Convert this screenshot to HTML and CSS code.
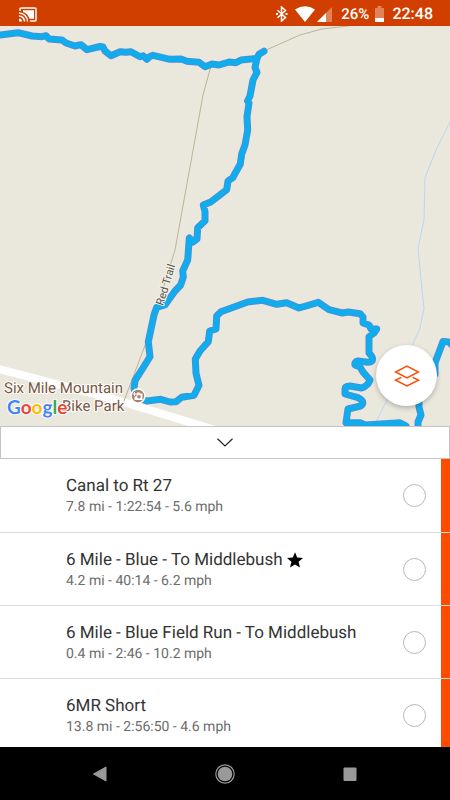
FILE: index.html
```html
<!DOCTYPE html>
<html lang="en">
<head>
<meta charset="utf-8">
<meta name="viewport" content="width=device-width, initial-scale=1">
<title>Trails</title>
<link rel="stylesheet" href="styles.css">
</head>
<body>
<header class="status">
  <svg class="cast" viewBox="0 0 18 15" width="18" height="15" aria-hidden="true">
    <path d="M1 4V2q0-1 1-1h14q1 0 1 1v11q0 1-1 1h-5" fill="none" stroke="#fff" stroke-width="1.5"/>
    <path d="M4 3.200h11v8.600h-4.500Q9 6.500 4 5z" fill="#fff"/>
    <path d="M0 6a8.500 8.500 0 0 1 8.500 8.500M0 9a5.500 5.500 0 0 1 5.500 5.500" fill="none" stroke="#fff" stroke-width="1.500"/>
    <path d="M0 11.500a3 3 0 0 1 3 3H0z" fill="#fff"/>
  </svg>
  <div class="indicators">
    <svg viewBox="0 0 12 16" width="12" height="16" aria-hidden="true">
      <path d="M1.500 4.200l8 7.300-4 3.500V1l4 3.500-8 7.300" fill="none" stroke="#fff" stroke-width="1.500"/>
      <path d="M0 7h2v2H0zM9.500 7h2v2h-2z" fill="#fff"/>
    </svg>
    <svg class="wifi" viewBox="0 0 20 16" width="20" height="16" aria-hidden="true">
      <path d="M0 3.500Q10-3 20 3.500L10 16z" fill="#fff"/>
    </svg>
    <svg viewBox="0 0 15 16" width="15" height="16" aria-hidden="true">
      <path d="M0 16L15 1v15z" fill="#fff" opacity=".35"/>
      <path d="M0 16l9-9v9z" fill="#fff"/>
    </svg>
    <span class="percent">26%</span>
    <svg class="battery" viewBox="0 0 9 16" width="9" height="16" aria-hidden="true">
      <path d="M0 2h2.500V0h4v2H9v10H0z" fill="#fff" opacity=".35"/>
      <path d="M0 12h9v4H0z" fill="#fff"/>
    </svg>
    <time>22:48</time>
  </div>
</header>

<main class="map">
  <svg class="terrain" viewBox="0 26 450 400" preserveAspectRatio="xMidYMid slice" role="img" aria-label="Trail map">
    <polyline class="road" points="-5,368 110,398 215,430"/>
    <path class="river" d="M450 122L436 150 425 178 424 220 418 248 422 290 424 308 420 328 412 346 387 400 374 426"/>
    <path class="path" d="M264 51L300 35 322 29 348 26M211 66L203 95 175 250 171 263 147 340 124 401"/>
    <g class="trails">
      <path id="t1" d="M-4 35.500L0 35 18 32.700 32 36 42 36.700 46 35.700 49 39 62 40 66 43 75 46 81 44.700 87 49.700 100 46.500 103 47 105 51 111 55.700 120 51.700 126 52.300 131 51.700 140 56.700 143 55.700 147 59.300 150 56.500 153 55.300 170 59.300 181 59 187 61.300 199 62.300 205 66.700 212 64 219 65 229 62 236 62.700 241 60 257 58.300 259 54.300 264 51.300"/>
      <path id="t2" d="M257 58L255 67.700 257 72.300 253 80 250 96 247.500 101 249 103 247 116.700 247.700 130 245 145 241.700 154 240.300 164 232.700 177.700 228 181 226.700 189.700 210.700 202 203.300 205 205 211.700 205 220.700 197.700 227.700 197 239 193 242 189.300 238 187.700 260 182.700 271 183.300 277 180.700 285 175 291 165 305 156.700 307.300 154 315 148.300 341.700 150 356.700 146.700 362 135 380.700 134 388 136 397 146.700 401 160.700 399.300 170 402 176 401.700 181.700 397.300 194 395.300 199 385.300 196 373.300 195.300 359 200 351 208.300 341.700 209.700 331 216 329 216.700 316 221 311.700 247.700 302 262.700 300.300 276.700 304.300 286.700 302.700 299 308 318.300 302.300 329 309.700 342.300 313 348.300 312 360 313.700 363 317 363 323 369 325 371 329 376.700 329 374 333 369 336.700 369 353Q374 358 372 361 370 363 366 362L358 361Q354 362 355 365L360 367 363 372 370 380Q368 386 361.700 388L350 386Q345 386 345 389V394L358 397.700Q366 402 360.700 406L348 409 346 422.700 360 422.700 365 425 400 422.700 406 426"/>
      <path id="t3" d="M452 345L449 342 443 341.500 435 363V374M419 402L419 407 421 415 418 422V430"/>
    </g>
    <g class="trail-core">
      <use href="#t1"/><use href="#t2"/><use href="#t3"/>
    </g>
    <text class="trail-name" transform="translate(163 306) rotate(-73)">Red Trail</text>
    <g class="place">
      <text x="4" y="393">Six Mile Mountain</text>
      <text x="62" y="411">Bike Park</text>
    </g>
    <circle cx="138" cy="396" r="7" fill="#a9826b" stroke="#fff" stroke-width="1.500"/>
    <path d="M136.500 393.500l1-1h2l1 1h2v6.500h-8v-3.500h2z" fill="#fff"/>
    <circle cx="139" cy="396.800" r="1.800" fill="#a9826b"/>
    <path d="M134.500 392v4M132.500 394h4" stroke="#fff" fill="none"/>
    <text class="google" x="7" y="414"><tspan fill="#4285f4">G</tspan><tspan fill="#ea4335">o</tspan><tspan fill="#fbbc05">o</tspan><tspan fill="#4285f4">g</tspan><tspan fill="#34a853">l</tspan><tspan fill="#ea4335">e</tspan></text>
  </svg>
  <button class="layers" type="button" aria-label="Map layers">
    <svg viewBox="0 0 26 22" width="26" height="22" aria-hidden="true">
      <path d="M13 1.200L24.500 7 13 12.800 1.500 7zM7.300 12.300L1.500 15.200 13 20.800 24.500 15.200 18.700 12.300" fill="none" stroke="#ff4b00" stroke-width="1.500"/>
    </svg>
  </button>
</main>

<button class="handle" type="button" aria-label="Collapse list">
  <svg viewBox="0 0 16 9" width="16" height="9" aria-hidden="true">
    <path d="M.5.800L8 8 15.500.800" fill="none" stroke="#222" stroke-width="1.200"/>
  </svg>
</button>

<ul class="list">
  <li class="row">
    <label class="info" for="r1"><span class="name">Canal to Rt 27</span><span class="stats">7.8 mi - 1:22:54 - 5.6 mph</span></label>
    <input class="pick" type="radio" name="route" id="r1">
  </li>
  <li class="row">
    <label class="info" for="r2"><span class="name">6 Mile - Blue - To Middlebush
      <svg class="star" viewBox="0 0 16 16" width="16" height="16" aria-hidden="true"><path d="M8 .3l2.200 5.300 5.800.4-4.400 3.800L13 15.500 8 12.400 3 15.500l1.400-5.700L0 6l5.800-.4z"/></svg></span><span class="stats">4.2 mi - 40:14 - 6.2 mph</span></label>
    <input class="pick" type="radio" name="route" id="r2">
  </li>
  <li class="row">
    <label class="info" for="r3"><span class="name">6 Mile - Blue Field Run - To Middlebush</span><span class="stats">0.4 mi - 2:46 - 10.2 mph</span></label>
    <input class="pick" type="radio" name="route" id="r3">
  </li>
  <li class="row">
    <label class="info" for="r4"><span class="name">6MR Short</span><span class="stats">13.8 mi - 2:56:50 - 4.6 mph</span></label>
    <input class="pick" type="radio" name="route" id="r4">
  </li>
</ul>

<nav class="system">
  <button type="button" aria-label="Back"><svg viewBox="0 0 20 20" width="20" height="20"><path d="M3.500 10L16 3v14z" fill="#999" stroke="#999" stroke-linejoin="round"/></svg></button>
  <button type="button" aria-label="Home"><svg viewBox="0 0 20 20" width="20" height="20"><circle cx="10" cy="10" r="9.200" fill="none" stroke="#999" stroke-width="1.200"/><circle cx="10" cy="10" r="7.300" fill="#999"/></svg></button>
  <button type="button" aria-label="Recent apps"><svg viewBox="0 0 20 20" width="20" height="20"><rect x="3.500" y="3.500" width="13" height="13.500" rx="1" fill="#999"/></svg></button>
</nav>
</body>
</html>
```
FILE: styles.css
```css
* {
  box-sizing: border-box;
}

body {
  margin: 0;
  height: 100vh;
  display: flex;
  flex-direction: column;
  background: #fff;
  font-family: Roboto, sans-serif;
  text-rendering: geometricPrecision;
  color: #333;
}

button {
  margin: 0;
  padding: 0;
  border: 0;
  background: none;
}

svg {
  display: block;
}

.status {
  flex: none;
  height: 26px;
  padding: 2px 17px 0 19px;
  display: flex;
  align-items: center;
  justify-content: space-between;
  background: #d13f00;
  color: #fff;
  font-size: 16px;
  font-weight: 500;
  line-height: 20px;
}

.indicators {
  display: flex;
  align-items: center;
}

.wifi {
  margin-left: 7px;
  margin-right: 2px;
}

.percent {
  margin-left: 9px;
  font-size: 15px;
}

.battery {
  margin: 0 8px 0 6px;
}

.map {
  flex: 1;
  min-height: 0;
  position: relative;
  overflow: hidden;
  background: #eae8dd;
}

.terrain {
  width: 100%;
  height: 100%;
}

.road,
.river,
.path,
.trails,
.trail-core {
  fill: none;
  stroke-linejoin: round;
  stroke-linecap: round;
}

.road {
  stroke: #fff;
  stroke-width: 8px;
}

.river {
  stroke: #bad5f5;
  stroke-width: 1px;
}

.path {
  stroke: #b9b596;
  stroke-width: 1px;
}

.trails {
  stroke: #4a8fdc;
  stroke-width: 7px;
}

.trail-core {
  stroke: #0eaeed;
  stroke-width: 5px;
}

.trails path {
  stroke: inherit;
}

.trail-name,
.place,
.google {
  paint-order: stroke;
  stroke: #fff;
  stroke-width: 2px;
  stroke-linejoin: round;
}

.trail-name {
  fill: #55544a;
  stroke: #f3f2ea;
  font-size: 11px;
}

.place {
  fill: #7a573f;
  font-size: 15px;
}

.google {
  font-family: Lato, sans-serif;
  font-size: 19px;
  font-weight: 700;
}

.layers {
  position: absolute;
  right: 13px;
  bottom: 20px;
  width: 61px;
  height: 61px;
  border-radius: 50%;
  display: grid;
  place-items: center;
  background: #fff;
  box-shadow: 0 2px 5px rgba(0, 0, 0, 0.25);
}

.handle {
  flex: none;
  height: 33px;
  border: 1px solid #c4c4c4;
  display: grid;
  place-items: center;
  background: #fff;
}

.list {
  flex: none;
  height: 36vh;
  margin: 0;
  padding: 0;
  overflow: hidden;
  list-style: none;
}

.row {
  height: 73px;
  padding: 0 24px 0 66px;
  display: flex;
  align-items: center;
  justify-content: space-between;
  background: linear-gradient(#ff4b00, #ff4b00) right / 9px 100% no-repeat;
}

.row + .row {
  height: 74px;
  margin-bottom: -1px;
  border-top: 1px solid #dcdcdc;
}

.info {
  padding-top: 1px;
  display: flex;
  flex-direction: column;
}

.name {
  display: flex;
  align-items: center;
  gap: 4px;
  font-size: 17px;
  line-height: 22px;
}

.stats {
  color: #6c6c6c;
  font-size: 14px;
  line-height: 20px;
}

.star {
  fill: #000;
}

.pick {
  appearance: none;
  flex: none;
  width: 23px;
  height: 23px;
  margin: 0;
  border: 1px solid #b8b8b8;
  border-radius: 50%;
  background: #fff;
}

.system {
  flex: none;
  height: 53px;
  padding: 0 38px;
  display: grid;
  grid-template-columns: repeat(3, 1fr);
  place-items: center;
  background: #000;
}
```
